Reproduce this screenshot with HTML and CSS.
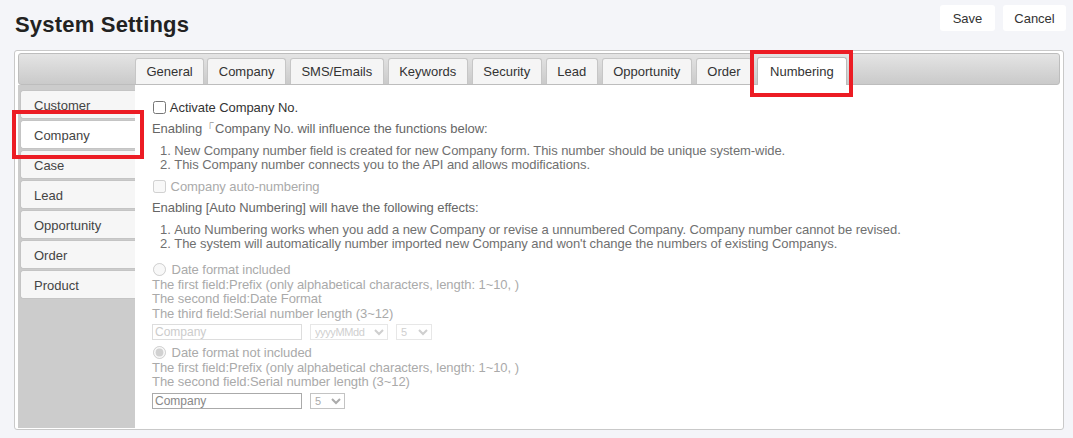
FILE: index.html
```html
<!DOCTYPE html>
<html lang="en">
<head>
<meta charset="utf-8">
<title>System Settings</title>
<link rel="stylesheet" href="styles.css">
</head>
<body>
<header class="top">
  <h1 class="title">System Settings</h1>
  <div class="actions">
    <button class="btn btn-save" type="button">Save</button>
    <button class="btn btn-cancel" type="button">Cancel</button>
  </div>
</header>
<section class="panel">
  <div class="tabbar">
    <span class="tab">General</span>
    <span class="tab">Company</span>
    <span class="tab">SMS/Emails</span>
    <span class="tab">Keywords</span>
    <span class="tab">Security</span>
    <span class="tab">Lead</span>
    <span class="tab">Opportunity</span>
    <span class="tab">Order</span>
    <span class="tab active">Numbering</span>
  </div>
  <div class="body">
    <nav class="side">
      <span class="side-tab">Customer</span>
      <span class="side-tab active">Company</span>
      <span class="side-tab">Case</span>
      <span class="side-tab">Lead</span>
      <span class="side-tab">Opportunity</span>
      <span class="side-tab">Order</span>
      <span class="side-tab">Product</span>
    </nav>
    <div class="content">
      <label class="opt"><input type="checkbox" class="chk"> Activate Company No.</label>
      <p class="desc">Enabling「Company No. will influence the functions below:</p>
      <ol class="list">
        <li>New Company number field is created for new Company form. This number should be unique system-wide.</li>
        <li>This Company number connects you to the API and allows modifications.</li>
      </ol>
      <label class="opt opt-disabled"><input type="checkbox" class="chk" disabled> Company auto-numbering</label>
      <p class="desc">Enabling [Auto Numbering] will have the following effects:</p>
      <ol class="list">
        <li>Auto Numbering works when you add a new Company or revise a unnumbered Company. Company number cannot be revised.</li>
        <li>The system will automatically number imported new Company and won't change the numbers of existing Companys.</li>
      </ol>
      <div class="fmt fmt-first">
        <label class="fmt-line"><input type="radio" name="fmt" class="rad" disabled> Date format included</label>
        <div class="fmt-line">The first field:Prefix (only alphabetical characters, length: 1~10, )</div>
        <div class="fmt-line">The second field:Date Format</div>
        <div class="fmt-line">The third field:Serial number length (3~12)</div>
        <div class="fields">
          <input class="txt" type="text" placeholder="Company" disabled>
          <select class="sel sel-date" disabled><option>yyyyMMdd</option></select>
          <select class="sel sel-num" disabled><option>5</option></select>
        </div>
      </div>
      <div class="fmt fmt-second">
        <label class="fmt-line"><input type="radio" name="fmt" class="rad" checked disabled> Date format not included</label>
        <div class="fmt-line">The first field:Prefix (only alphabetical characters, length: 1~10, )</div>
        <div class="fmt-line">The second field:Serial number length (3~12)</div>
        <div class="fields">
          <input class="txt txt-on" type="text" value="Company" disabled>
          <select class="sel sel-num sel-on" disabled><option>5</option></select>
        </div>
      </div>
    </div>
  </div>
  <div class="mark mark-tab"></div>
  <div class="mark mark-side"></div>
</section>
</body>
</html>
```

FILE: styles.css
```css
* { box-sizing: border-box; }

html, body {
  margin: 0;
  padding: 0;
}

body {
  background: #f4f5f9;
  font-family: "Liberation Sans", Arial, sans-serif;
  font-size: 13px;
  color: #333;
  width: 1073px;
  height: 438px;
  overflow: hidden;
}

.top {
  display: flex;
  justify-content: space-between;
  align-items: flex-start;
  height: 50px;
  padding: 0 7px 0 15px;
}

.title {
  margin: 0;
  padding-top: 12px;
  font-size: 22px;
  line-height: 26px;
  font-weight: bold;
  color: #222;
  letter-spacing: 0.2px;
}

.actions {
  display: flex;
  gap: 8px;
  padding-top: 5px;
}

.btn {
  height: 26px;
  border: none;
  border-radius: 3px;
  background: #fff;
  font-family: "Liberation Sans", Arial, sans-serif;
  font-size: 13px;
  color: #333;
  padding: 0;
}

.btn-save { width: 55px; }
.btn-cancel { width: 63px; }

.panel {
  position: relative;
  margin: 0 9px 0 14px;
  height: 380px;
  border: 1px solid #c9c9c9;
  border-radius: 3px;
  background: #fff;
  padding: 2px 3px 1px 3px;
}

.tabbar {
  display: flex;
  align-items: flex-end;
  gap: 4px;
  height: 32px;
  padding-left: 116px;
  border: 1px solid #bdbdbd;
  border-radius: 3px;
  background: linear-gradient(#e4e4e4, #cacaca);
}

.tab {
  height: 26px;
  line-height: 25px;
  padding: 0 10.5px;
  background: #f5f5f5;
  border: 1px solid #c6c6c6;
  border-bottom: none;
  border-radius: 3px 3px 0 0;
  color: #333;
  white-space: nowrap;
}

.tab:first-child { margin-right: -1px; }

.tab.active {
  position: relative;
  height: 28px;
  margin-bottom: -1px;
  margin-left: 1px;
  padding: 0 12px;
  line-height: 27px;
  background: #fff;
  border-color: #bbb;
}

.body {
  display: flex;
  height: 343px;
}

.side {
  display: flex;
  flex-direction: column;
  width: 117px;
  flex: none;
  background: #cccccc;
  padding: 5px 0 0 2px;
  gap: 1px;
}

.side-tab {
  height: 29px;
  line-height: 29px;
  padding-left: 13px;
  background: #f6f6f6;
  border: 1px solid #c4c4c4;
  border-right: none;
  border-radius: 3px 0 0 3px;
  color: #444;
}

.side-tab.active {
  background: #fff;
}

.content {
  flex: 1;
  padding: 15px 0 0 17px;
  color: #666;
  letter-spacing: -0.06px;
}

.opt {
  display: block;
  height: 15px;
  line-height: 15px;
  color: #333;
}

.opt-disabled { color: #aaa; }

.chk {
  width: 13px;
  height: 13px;
  margin: 0 1px 0 1px;
  vertical-align: -2px;
}

.desc {
  margin: 6px 0 0;
  line-height: 15px;
  color: #666;
}

.list {
  margin: 8px 0 8px;
  padding: 0 0 0 8px;
  list-style-position: inside;
  line-height: 13.5px;
  color: #707070;
}

.fmt {
  color: #aaa;
}

.fmt-first { margin-top: 13px; }
.fmt-second { margin-top: 6px; }

.fmt-line {
  display: block;
  line-height: 14.5px;
  height: 14.5px;
  white-space: nowrap;
}

.rad {
  width: 13px;
  height: 13px;
  margin: 0 2px 0 1px;
  vertical-align: -2px;
}

.fields {
  display: flex;
  align-items: center;
  gap: 8px;
  margin-top: 3px;
  height: 16px;
}

.txt {
  width: 150px;
  height: 16px;
  padding: 0 2px;
  border: 1px solid #ddd;
  background: #fff;
  font-family: "Liberation Sans", Arial, sans-serif;
  font-size: 12px;
  color: #ccc;
}

.txt::placeholder { color: #ccc; }

.txt-on {
  border-color: #aaa;
  color: #888;
}

.sel {
  height: 16px;
  padding: 0;
  border: 1px solid #ddd;
  background: #fff;
  font-family: "Liberation Sans", Arial, sans-serif;
  font-size: 11px;
  letter-spacing: -0.4px;
  color: #bbb;
}

.sel-date { width: 78px; }
.sel-num { width: 36px; }
.sel-on { width: 35px; border-color: #aaa; color: #888; }

.mark {
  position: absolute;
  border: 4px solid #ec1c24;
  pointer-events: none;
}

.mark-tab {
  left: 735px;
  top: -1px;
  width: 103px;
  height: 47px;
}

.mark-side {
  left: -3px;
  top: 59px;
  width: 132px;
  height: 49px;
}
```
